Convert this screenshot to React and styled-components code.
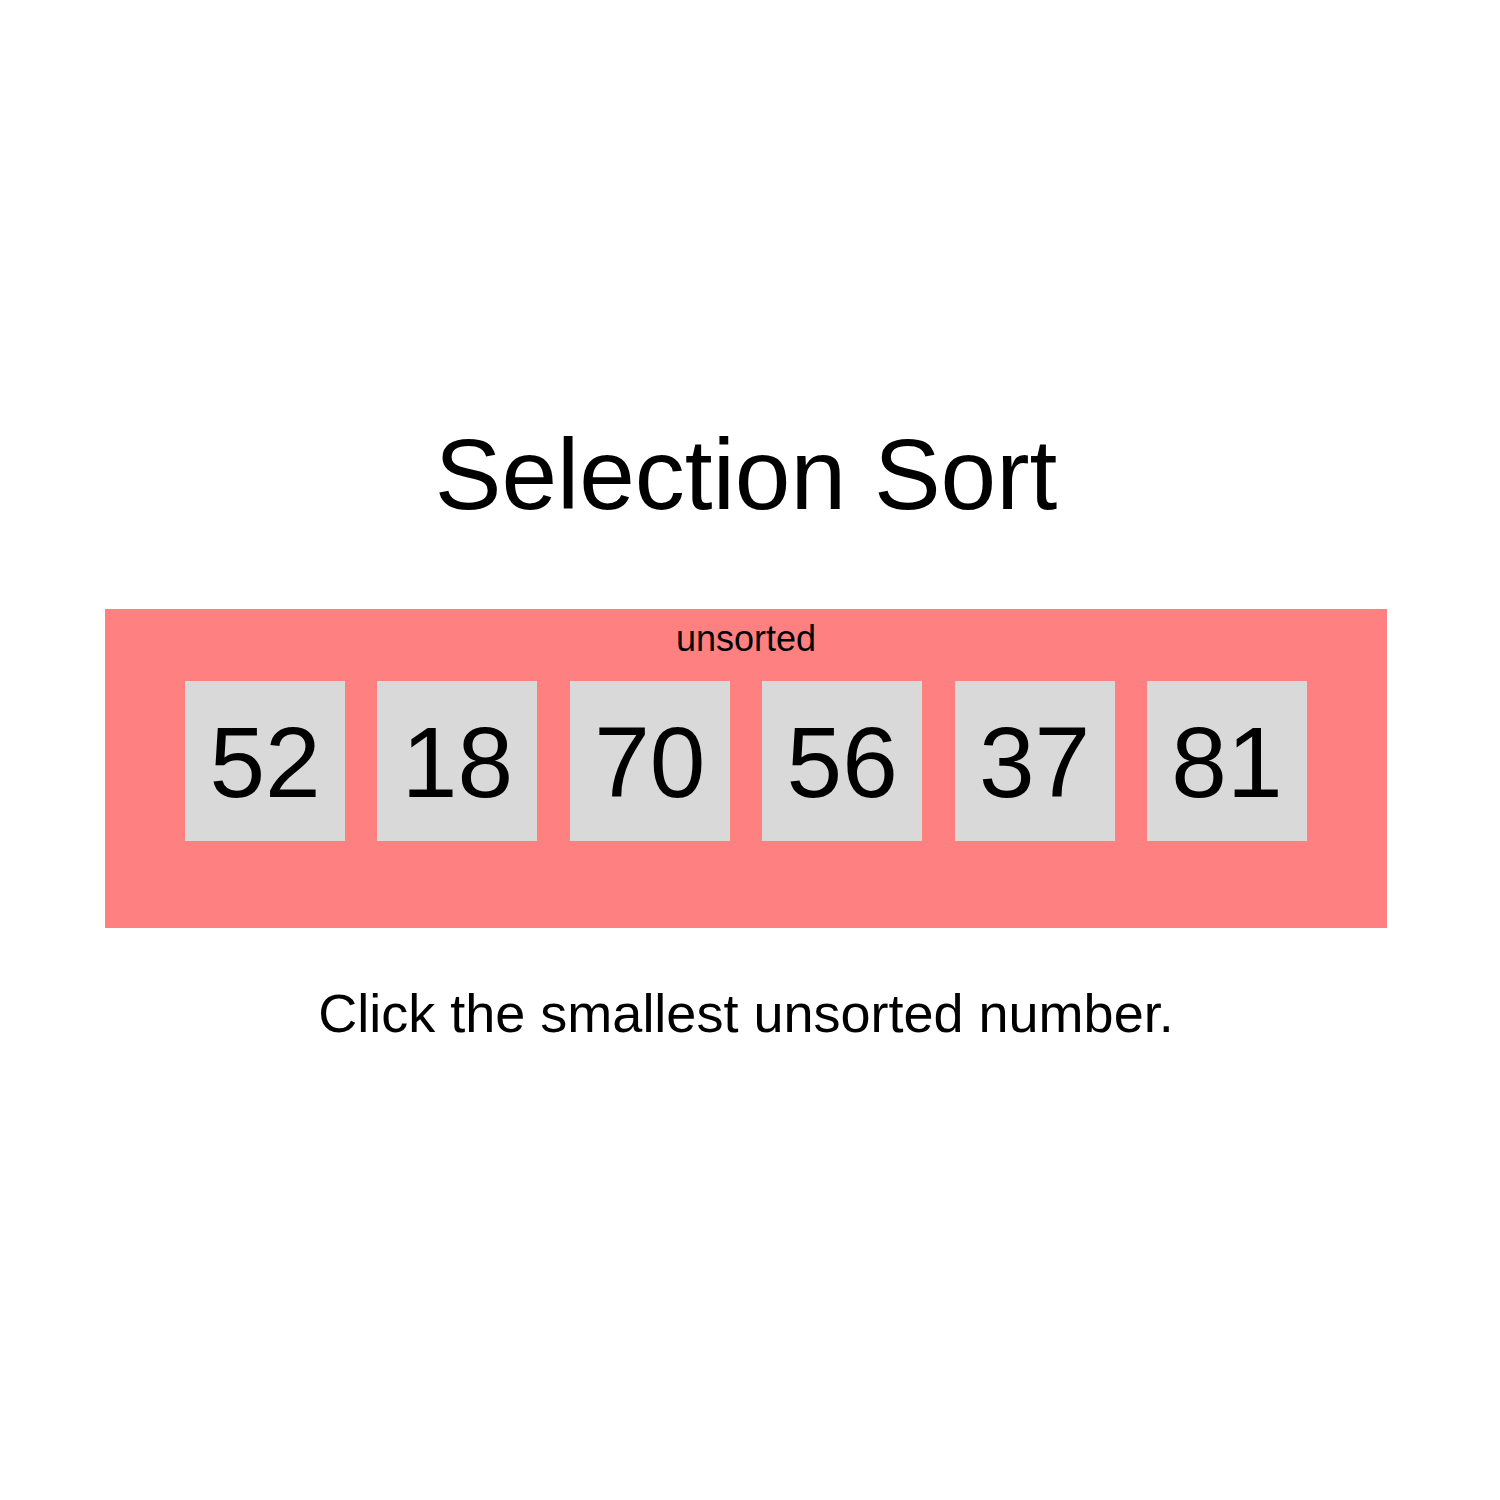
import styled, { createGlobalStyle } from 'styled-components';

const GlobalStyle = createGlobalStyle`
	body {
		margin: 0;
		background: #fff;
		font-family: 'Liberation Sans', Arial, Helvetica, sans-serif;
		color: #000;
	}
`;

const Page = styled.div`
	width: 1492px;
	display: flex;
	flex-direction: column;
	align-items: center;
	padding-top: 424px;
`;

const Title = styled.h1`
	margin: 0;
	font-size: 100px;
	line-height: 1;
	font-weight: 400;
`;

const Region = styled.div`
	box-sizing: border-box;
	width: 1282px;
	margin-top: 85px;
	padding: 12px 80px 87px;
	background: ${({ $color }) => $color};
	display: flex;
	flex-direction: column;
	align-items: center;
	gap: 24px;
`;

const Label = styled.div`
	font-size: 36px;
	line-height: 1;
`;

const Row = styled.div`
	width: 100%;
	display: flex;
	justify-content: space-between;
`;

const Cell = styled.button`
	width: 160px;
	height: 160px;
	border: none;
	padding: 2px 0 0;
	margin: 0;
	background: #d9d9d9;
	font-family: inherit;
	font-size: 100px;
	line-height: 158px;
	color: #000;
	text-align: center;
	cursor: pointer;
`;

const Hint = styled.p`
	margin: 58px 0 0;
	font-size: 54px;
	line-height: 1;
`;

const numbers = [52, 18, 70, 56, 37, 81];

export default function App() {
	return (
		<>
			<GlobalStyle />
			<Page>
				<Title>Selection Sort</Title>
				<Region $color="#ff8080">
					<Label>unsorted</Label>
					<Row>
						{numbers.map((n) => (
							<Cell key={n}>{n}</Cell>
						))}
					</Row>
				</Region>
				<Hint>Click the smallest unsorted number.</Hint>
			</Page>
		</>
	);
}
